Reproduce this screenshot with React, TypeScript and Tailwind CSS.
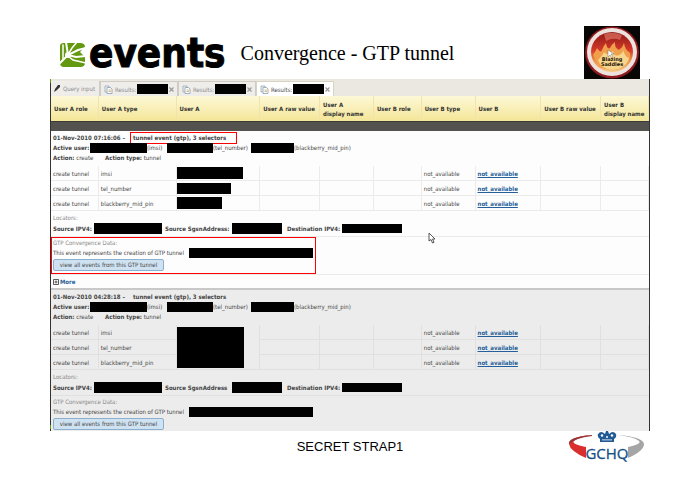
import React from "react";

const columns = [
  { label: "User A role", width: "w-[8%]" },
  { label: "User A type", width: "w-[13%]" },
  { label: "User A", width: "w-[14%]" },
  { label: "User A raw value", width: "w-[10%]" },
  { label: "User A\ndisplay name", width: "w-[9%]" },
  { label: "User B role", width: "w-[8%]" },
  { label: "User B type", width: "w-[9%]" },
  { label: "User B", width: "w-[11%]" },
  { label: "User B raw value", width: "w-[10%]" },
  { label: "User B\ndisplay name", width: "w-[8%]" },
];

const selectors = ["imsi", "tel_number", "blackberry_mid_pin"];

function Redacted({ className }: { className: string }) {
  return <span className={`block shrink-0 bg-black ${className}`} />;
}

function EventsLogo() {
  return (
    <div className="flex items-center gap-[3px]">
      <svg className="mt-1 h-[26px] w-[27px]" viewBox="0 0 27 26" aria-hidden="true">
        <path d="M1 4 Q1 1 5 1 H21 Q26 1 26 5 L21 10 L26 15 V21 Q26 25 21 25 H5 Q1 25 1 21 Z" fill="#63990f" />
        <g fill="none" stroke="#fff" strokeLinecap="round">
          <path d="M0 22 L9 13 L19 8 L27 6" strokeWidth="2" />
          <path d="M9 13 L7 0" strokeWidth="2" />
          <path d="M9 13 L17 15 L27 14" strokeWidth="2" />
          <path d="M9 14 L14 18 L27 21" strokeWidth="1.5" />
          <path d="M10 11 L13 6 L18 0" strokeWidth="1.5" />
          <path d="M4 3 L4 17" strokeWidth="1.5" />
        </g>
        <circle cx="9" cy="13" r="3" fill="#fff" />
      </svg>
      <span className="font-['DejaVu_Sans_Condensed','DejaVu_Sans',sans-serif] text-[40px] leading-[40px] font-bold text-black [-webkit-text-stroke:1px_black]">
        events
      </span>
    </div>
  );
}

function BlazingSaddles() {
  return (
    <svg className="h-[53px] w-[56px]" viewBox="0 0 56 53" role="img" aria-label="Blazing Saddles">
      <defs>
        <linearGradient id="badge" x1="0" y1="0" x2="0" y2="1">
          <stop offset="0" stopColor="#8e1a16" />
          <stop offset="0.45" stopColor="#d2372a" />
          <stop offset="0.7" stopColor="#ee8b40" />
          <stop offset="1" stopColor="#f3cf8a" />
        </linearGradient>
      </defs>
      <rect width="56" height="53" fill="#090606" />
      <ellipse cx="28" cy="26.500" rx="27" ry="26" fill="#8d1a1c" />
      <ellipse cx="28" cy="26" rx="25" ry="24" fill="#eee2df" />
      <ellipse cx="28" cy="26" rx="21" ry="20" fill="url(#badge)" />
      <path d="M9 29 Q12 25 13 22 Q17 28 18 24 Q20 19 22 17 Q23 24 26 22 Q28 18 31 16 Q30 21 35 24 Q39 21 40 17 Q41 24 46 27 Q48 36 38 42 Q27 47 15 41 Z" fill="#f0a04c" />
      <path d="M14 34 Q19 29 20 26 Q24 31 29 25 Q30 31 35 29 Q39 27 39 24 Q41 31 45 32 Q42 43 28 44 Q17 43 14 34" fill="#f7d58c" />
      <path d="M20 8 Q29 5 38 9 L36 14 Q29 11 22 15 Z" fill="#e88070" opacity="0.6" />
      <text x="28" y="35" textAnchor="middle" fontFamily="DejaVu Sans" fontWeight="bold" fontSize="5" fill="#241208">Blazing</text>
      <text x="28" y="40" textAnchor="middle" fontFamily="DejaVu Sans" fontWeight="bold" fontSize="5" fill="#241208">Saddles</text>
      <path d="M24 24 L24 31 L26 29 L28 32 L29 31 L27 28 L30 28 Z" fill="#fff" stroke="#555" strokeWidth="0.4" />
    </svg>
  );
}

function GchqLogo() {
  return (
    <svg className="h-[32px] w-[78px]" viewBox="0 0 78 32" role="img" aria-label="GCHQ">
      <path d="M24 4 Q0 6 1 13 Q2 20 18 27 L18 16 Q3 13 6 10 Q10 6 24 4" fill="#d9302f" />
      <path d="M24 4 Q0 6 1 13 Q7 7 24 5" fill="#96363a" />
      <path d="M50 4 Q75 6 76 13 Q76 20 60 27 L60 16 Q74 13 71 10 Q67 6 50 4" fill="#a6a5a6" />
      <g fill="#225a94">
        <path d="M30 3 Q33 -1 37 3 L38 0 L40 0 L41 3 Q45 -1 48 3 Q49 6 46 8 L46 11 L32 11 L32 8 Q29 6 30 3" />
      </g>
      <g fill="#fff">
        <circle cx="34" cy="4.500" r="1.200" />
        <circle cx="44" cy="4.500" r="1.200" />
        <circle cx="39" cy="6" r="1" />
        <rect x="34" y="8.500" width="10" height="0.800" />
      </g>
      <text x="39" y="28" textAnchor="middle" fontFamily="Open Sans, sans-serif" fontSize="15" fill="#174f86" stroke="#174f86" strokeWidth="0.300">GCHQ</text>
    </svg>
  );
}

function PageIcon() {
  return (
    <svg className="h-[9px] w-[9px] shrink-0" viewBox="0 0 9 9" aria-hidden="true">
      <path d="M1 1 H5 V7 H1 Z" fill="#eef3f8" stroke="#94a7b8" strokeWidth="0.8" />
      <path d="M3 2.500 H6.500 L8 4 V8.500 H3 Z" fill="#fff" stroke="#8b9dae" strokeWidth="0.8" />
      <path d="M4.500 5 H7 M4.500 6.500 H7" stroke="#c8a860" strokeWidth="0.800" />
    </svg>
  );
}

function ResultsTab({ active }: { active?: boolean }) {
  return (
    <div
      className={`flex w-[78px] items-center border border-b-0 px-[3px] ${
        active ? "border-[#d8d4c4] bg-white text-[#444]" : "border-[#cfccc6] bg-[#efedea] text-[#8a8a8a]"
      }`}
    >
      <button type="button" className="flex items-center gap-[2px]">
        <PageIcon />
        <span className="w-[20px] text-left">Results:</span>
        <Redacted className="h-[10px] w-[31px]" />
      </button>
      <button type="button" aria-label="Close tab" className="ml-auto text-[#999]">
        <svg className="h-[5px] w-[5px]" viewBox="0 0 5 5" aria-hidden="true">
          <path d="M0.500 0.500 L4.500 4.500 M4.500 0.500 L0.500 4.500" stroke="currentColor" strokeWidth="1.200" />
        </svg>
      </button>
    </div>
  );
}

type EventProps = {
  time: string;
  flagged?: boolean;
  sgsnLabel: string;
};

function EventGroup({ time, flagged, sgsnLabel }: EventProps) {
  const line = flagged ? "border-[#ebebeb]" : "border-[#e0e0e0]";
  const cell = `h-[15px] border-r border-b p-0 px-[2px] ${line}`;
  const boxes = ["h-[12px] w-[66px]", "h-[11px] w-[54px]", "h-[12px] w-[45px]"];
  return (
    <tbody className={flagged ? "bg-[#fdfdfd]" : "bg-[#ececec]"}>
      <tr>
        <td colSpan={10} className="h-[35px] p-0 px-[2px] pt-[2px] align-top leading-[10px]">
          <div className="flex font-bold">
            <span className="w-[78px]">{time} –</span>
            <span className={flagged ? "-my-px -ml-px w-[107px] border border-[#ff0000] pl-[2px]" : "pl-[2px]"}>
              tunnel event (gtp), 3 selectors
            </span>
          </div>
          <div className="grid grid-cols-[37px_57px_20px_46px_38px_43px_auto] items-center">
            <b>Active user:</b>
            <Redacted className="h-[10px]" />
            <span>(imsi)</span>
            <Redacted className="h-[10px]" />
            <span>(tel_number)</span>
            <Redacted className="h-[10px]" />
            <span>(blackberry_mid_pin)</span>
          </div>
          <div className="flex">
            <span className="w-[52px]"><b>Action:</b> create</span>
            <span><b>Action type:</b> tunnel</span>
          </div>
        </td>
      </tr>
      {selectors.map((name, i) => (
        <tr key={name}>
          <td className={cell}>create tunnel</td>
          <td className={cell}>{name}</td>
          {flagged ? (
            <td className={`h-[15px] border-r border-b p-0 ${line}`}><Redacted className={boxes[i]} /></td>
          ) : (
            i === 0 && (
              <td rowSpan={3} className={`border-r border-b p-0 ${line}`}>
                <Redacted className="h-[41px] w-[67px]" />
              </td>
            )
          )}
          <td className={cell} />
          <td className={cell} />
          <td className={cell} />
          <td className={cell}>not_available</td>
          <td className={cell}>
            <a href="#event" className="font-bold text-[#245f99] underline">not_available</a>
          </td>
          <td className={cell} />
          <td className={cell} />
        </tr>
      ))}
      <tr>
        <td colSpan={10} className={`h-[26px] border-b p-0 px-[2px] pt-px align-top leading-[11px] ${line}`}>
          <div className="text-[#888]">Locators:</div>
          <div className="grid grid-cols-[41px_68px_3px_67px_50px_5px_55px_60px] items-center font-bold">
            <span>Source IPV4:</span>
            <Redacted className="h-[11px]" />
            <span />
            <span>{sgsnLabel}</span>
            <Redacted className="h-[11px]" />
            <span />
            <span>Destination IPV4:</span>
            <Redacted className="h-[9px]" />
          </div>
        </td>
      </tr>
      <tr>
        <td colSpan={10} className={`p-0 align-top leading-[10px] ${flagged ? "h-[37px] border-b border-[#ebebeb]" : "h-[35px]"}`}>
          <div className={flagged ? "w-[265px] border border-[#ff0000] px-px pb-[2px]" : "w-[265px] px-[2px] pt-px"}>
            <div className="text-[#888]">GTP Convergence Data:</div>
            <div className="flex items-center">
              <span className="w-[136px] whitespace-nowrap">This event represents the creation of GTP tunnel</span>
              <Redacted className="h-[10px] w-[124px]" />
            </div>
            <button type="button" className="mt-px block h-[12px] w-[111px] rounded-[2px] border border-[#8bb0cf] bg-[#cfe2f1] text-center leading-[10px]">
              view all events from this GTP tunnel
            </button>
          </div>
        </td>
      </tr>
    </tbody>
  );
}

export default function App() {
  return (
    <main className="min-h-[495px] bg-white px-[50px] pt-[26px]">
      <header className="flex h-[53px] items-center pr-[10px] pl-[9px]">
        <EventsLogo />
        <h1 className="ml-[15px] font-['Liberation_Serif',serif] text-[20px] leading-[24px] text-black">
          Convergence - GTP tunnel
        </h1>
        <div className="ml-auto"><BlazingSaddles /></div>
      </header>

      <section className="relative border-x border-[#333] font-['DejaVu_Sans_Condensed','DejaVu_Sans',sans-serif] text-[6px] leading-[9px] text-[#444]">
        <nav className="flex h-[17px] items-stretch bg-[#ebe8e2] pt-[2px]">
          <button type="button" className="flex w-[49px] items-center gap-[2px] border-r border-[#cfccc6] bg-[#efedea] pl-[2px] text-[#8a8a8a]">
            <svg className="h-[9px] w-[8px]" viewBox="0 0 8 9" aria-hidden="true">
              <path d="M1 8 L2 5 L5 1 L7 1 L7 3 L4 6 Z" fill="#333" />
            </svg>
            Query input
          </button>
          <ResultsTab />
          <ResultsTab />
          <ResultsTab active />
        </nav>

        <table className="w-full table-fixed border-separate border-spacing-0">
          <thead>
            <tr>
              {columns.map((c) => (
                <th key={c.label} scope="col" className={`${c.width} h-[25px] border-r border-[#efe4b0] bg-linear-to-b from-[#fdf8d6] to-[#f4e697] p-0 pl-[3px] text-left whitespace-pre-line text-[#333]`}>
                  {c.label}
                </th>
              ))}
            </tr>
            <tr>
              <td colSpan={10} className="h-[10px] border-t border-[#3b3a36] bg-[#53524e] p-0" />
            </tr>
          </thead>
          <EventGroup time="01-Nov-2010 07:16:06" sgsnLabel="Source SgsnAddress:" flagged />
          <tbody className="bg-[#fdfdfd]">
            <tr>
              <td colSpan={10} className="h-[15px] border-b-2 border-[#c8c8c8] p-0 px-[2px]">
                <button type="button" className="flex items-center gap-px font-bold text-[#245f99]">
                  <svg className="h-[6px] w-[6px]" viewBox="0 0 6 6" aria-hidden="true">
                    <path d="M0.500 0.500 H5.500 V5.500 H0.500 Z M3 1.500 V4.500 M1.500 3 H4.500" fill="none" stroke="#333" strokeWidth="0.800" />
                  </svg>
                  More
                </button>
              </td>
            </tr>
          </tbody>
          <EventGroup time="01-Nov-2010 04:28:18" sgsnLabel="Source SgsnAddress" />
        </table>

        <svg className="absolute top-[153px] left-[377px] h-[12px] w-[8px]" viewBox="0 0 8 12" aria-hidden="true">
          <path d="M1 1 V9 L3 7.500 L4.500 11 L6 10.300 L4.500 7 H7 Z" fill="#fff" stroke="#444" strokeWidth="0.900" />
        </svg>
        <span className="absolute top-0 -left-px h-[4px] w-px bg-[#63990f]" />
        <span className="absolute bottom-[2px] -left-px h-[4px] w-px bg-[#63990f]" />
      </section>

      <footer className="grid grid-cols-[1fr_auto_1fr] items-center">
        <span />
        <p className="font-['Liberation_Sans',sans-serif] text-[13px] leading-[16px] text-black">SECRET STRAP1</p>
        <div className="flex justify-end pr-[4px]"><GchqLogo /></div>
      </footer>
    </main>
  );
}
